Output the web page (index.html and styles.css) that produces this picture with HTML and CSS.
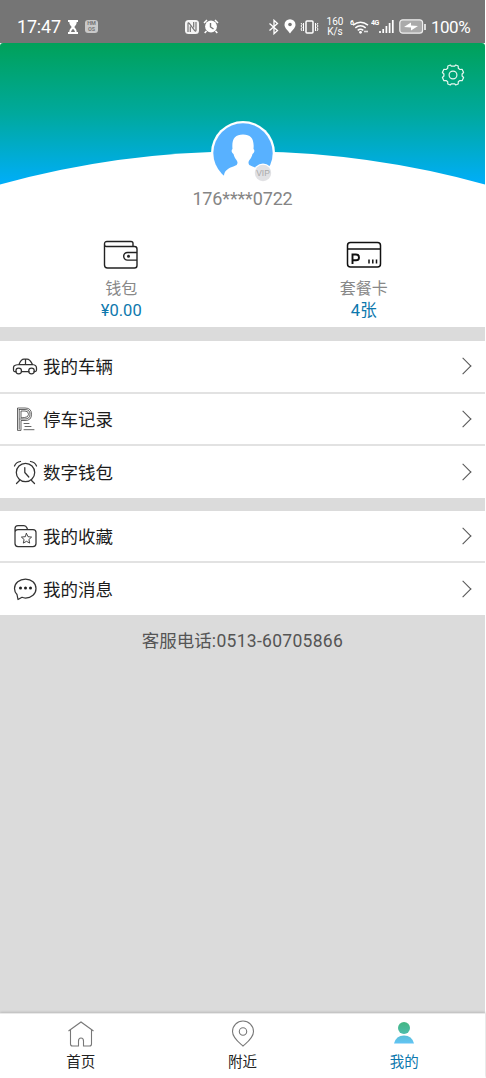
FILE: index.html
```html
<!DOCTYPE html>
<html lang="zh-CN">
<head>
<meta charset="utf-8">
<title>我的</title>
<link rel="stylesheet" href="styles.css">
</head>
<body>
<div class="screen">
  <header class="status">
    <span class="time">17:47</span>
    <svg class="hourglass" width="12" height="14" viewBox="0 0 12 14"><path d="M1 0h10v2H9.700c0 2-1 3.500-2.400 5 1.400 1.500 2.400 3 2.400 5H11v2H1v-2h1.300c0-2 1-3.500 2.400-5C3.300 5.500 2.300 4 2.300 2H1z" fill="#fff"/><path d="M4 12c.3-1.500 1-2.200 2-3 1 .8 1.700 1.500 2 3z" fill="#757575"/></svg>
    <span class="hmos">HM<br>OS</span>
    <svg class="nfc" width="14" height="14" viewBox="0 0 14 14"><rect width="14" height="14" rx="3.500" fill="#f4f4f4"/><path d="M3 12V4q0-2 1.300-.6l5.400 7.200Q11 12 11 10V2M5.300 12V6.500M8.700 2v5.500" fill="none" stroke="#757575" stroke-width="1.200"/></svg>
    <svg class="alarm" width="16" height="15" viewBox="0 0 16 15"><circle cx="8" cy="7.500" r="5.900" fill="#fff"/><path d="M1 4l3-3M12 1l3 3M3.500 12l-1.800 2M12.500 12l1.800 2" stroke="#fff" stroke-width="1.500"/><path d="M7.500 4v4l3 2" fill="none" stroke="#757575" stroke-width="1.400"/></svg>
    <svg class="bluetooth" width="12" height="16" viewBox="0 0 12 16"><path d="M1.500 4.500l8 7L6 14.700V1.300l3.500 3.200-8 7" fill="none" stroke="#fff" stroke-width="1.300"/></svg>
    <svg class="locate" width="12" height="15" viewBox="0 0 12 15"><path d="M6 14.500C4 11.500.5 9 .5 5.700a5.500 5.500 0 0 1 11 0C11.500 9 8 11.500 6 14.500z" fill="#fff"/><circle cx="6" cy="5.500" r="1.800" fill="#757575"/></svg>
    <svg class="vibrate" width="19" height="14" viewBox="0 0 19 14"><rect x="6" y="1" width="7" height="12" rx="1" fill="none" stroke="#fff" stroke-width="1.500"/><path d="M3.500 3v8M1 3l1 1.500L1 6l1 1.500L1 9l1 2M15.500 3v8M18 3l-1 1.500L18 6l-1 1.500L18 9l-1 2" fill="none" stroke="#fff"/></svg>
    <span class="speed">160<br>K/s</span>
    <svg class="wifi" width="20" height="17" viewBox="0 0 20 17"><text x="0" y="7" class="tiny">6</text><path d="M3 7.200q7.500-6 15 0M5.300 9.800q5.200-4 10.400 0M7.700 12.300q2.800-2.200 5.600 0" fill="none" stroke="#fff" stroke-width="1.500"/><circle cx="10.500" cy="14.300" r="1.400" fill="#fff"/><path d="M14 13.500h4" stroke="#ddd" stroke-width="1.600"/></svg>
    <svg class="signal" width="24" height="17" viewBox="0 0 24 17"><text x="0" y="7" class="tiny">4G</text><path d="M9 13v2M12.200 11v4M15.400 8v7M18.600 5v10M21.800 2v13" stroke="#fff" stroke-width="1.700"/></svg>
    <svg class="battery" width="28" height="15" viewBox="0 0 28 15"><rect x=".8" y=".8" width="22.800" height="13.400" rx="3" fill="#aaa" stroke="#eee" stroke-width="1.200"/><path d="M5 8l7-4.500v3l7 .5-7 4.500v-3z" fill="#fff"/><path d="M26 5v6" stroke="#fff" stroke-width="1.500"/></svg>
    <span class="percent">100%</span>
  </header>

  <section class="profile">
    <div class="hero">
      <svg class="curve" width="485" height="35" viewBox="0 0 485 35"><path d="M0 35V33.500A907 907 0 0 1 485 33.500V35z" fill="#fff"/></svg>
      <svg class="gear" width="24" height="24" viewBox="0 0 24 24" fill="none" stroke="#e5f7ef" stroke-width="1.200" stroke-linejoin="round"><path d="M9.300 2l1 1.200h3.400l1-1.200 2.500 1 .1 2.300 1.600 1.200 2.200-.2 1.500 3.200-1.500 1.500v2l1.500 1.500-1.500 3.200-2.200-.2-1.600 1.200-.1 2.300-2.500 1-1-1.200h-3.400l-1 1.200-2.500-1-.1-2.300-1.600-1.200-2.200.2-1.500-3.200 1.500-1.500v-2L1.400 9.500l1.500-3.200 2.200.2 1.600-1.200.1-2.300z"/><circle cx="12" cy="12" r="3.900"/></svg>
      <svg class="avatar" width="66" height="66" viewBox="0 0 66 66"><circle cx="33" cy="33" r="32" fill="#fff"/><circle cx="33" cy="33" r="29.700" fill="#58b1ff"/><path d="M14 56c0-5 4-7.500 8-9 4-1.500 5.500-2 5.500-4.500 0-2-3-4-4-8.500-2-1-2.500-4-1-5C21.500 19 25 14.500 33 14.500S44.500 19 43.500 29c1.500 1 1 4-1 5-1 4.500-4 6.500-4 8.500 0 2.500 1.500 3 5.500 4.500 4 1.500 8 4 8 9v10H14z" fill="#fff"/><circle cx="53" cy="53" r="9.500" fill="#fff"/><circle cx="53" cy="53" r="8.200" fill="#e1e1e4"/><text x="53" y="56" text-anchor="middle" class="vip">VIP</text></svg>
    </div>
    <div class="phone">176****0722</div>
    <div class="assets">
      <div class="asset">
        <svg width="36" height="30" viewBox="0 0 36 30" fill="none" stroke="#222" stroke-width="1.400"><path d="M30 7V3.500Q30 1.500 28 1.500H4Q1.500 1.500 1.500 4v21Q1.500 28 4.500 28h27q2.500 0 2.500-2.500V9q0-2.500-2.500-2.500H3.500Q1.500 6.500 1.500 4M34 12.500H24.500a3.800 3.800 0 0 0 0 7.600H34"/><circle cx="25.500" cy="16.300" r=".8" fill="#222"/></svg>
        <span class="label">钱包</span><span class="value">¥0.00</span>
      </div>
      <div class="asset">
        <svg width="36" height="30" viewBox="0 0 36 30" fill="none" stroke="#111" stroke-width="1.500"><rect x="1.500" y="2.500" width="33" height="24.500" rx="3"/><path d="M1.500 9h33M23 19.500v4M26.800 19.500v4M30.500 19.500v4"/><path d="M6.500 24V14.500h3.500q3 0 3 2.900t-3 2.900H6.500" stroke-width="1.900"/></svg>
        <span class="label">套餐卡</span><span class="value">4张</span>
      </div>
    </div>
  </section>

  <ul class="menu">
    <li class="row"><svg class="icon" width="26" height="26" viewBox="0 0 26 26"><path d="M4 18.500H2.500Q1.500 18.500 1.500 17v-2.500q0-2 2.500-2.500l3-.5q2-5.500 5-5.500h3q3 0 5.500 5.500 4 .5 4 3.500v2q0 1.500-1.500 1.500H22M9.500 18.500h7.500M7 11.500h13.500M13.500 6v5.500"/><circle cx="6.700" cy="18" r="2.800"/><circle cx="19.500" cy="18" r="2.800"/></svg><span>我的车辆</span><i class="arrow"></i></li>
    <li class="row"><svg class="icon park" width="26" height="26" viewBox="0 0 26 26"><path d="M5.500 24V2H13q6.500 0 6.500 6.300T13 14.500H9V24zM9 11.500V5h4q3.500 0 3.500 3.300T13 11.500zM7.200 3.500V23M7.200 3.500H13q5 0 5 4.700T13 13H8M12 17.500h5M13 20.500h6M12 23.700h10"/></svg><span>停车记录</span><i class="arrow"></i></li>
    <li class="row"><svg class="icon" width="26" height="26" viewBox="0 0 26 26"><circle cx="13.500" cy="13.500" r="9.200"/><path d="M12.800 8.500v5l4 4.500M2.500 7Q4 3 8.500 2.500M18.500 2.500Q23 3 24.500 7M7.500 21.500l-3 3M19.500 21.500l3 3"/></svg><span>数字钱包</span><i class="arrow"></i></li>
  </ul>
  <ul class="menu">
    <li class="row"><svg class="icon" width="26" height="26" viewBox="0 0 26 26"><path d="M6 6.500h15q3 0 3 3v11q0 3-3 3H6q-3 0-3-3v-15Q3 2.500 6 2.500h6Q14 2.500 15 5l.5 1.500M3 9q0-2.500 3-2.500"/><path stroke-width=".9" d="M14.500 10.500l1.500 3.200 3.600.4-2.700 2.400.8 3.600-3.200-1.800-3.200 1.800.8-3.600-2.700-2.400 3.600-.4z"/></svg><span>我的收藏</span><i class="arrow"></i></li>
    <li class="row"><svg class="icon" width="26" height="26" viewBox="0 0 26 26"><path d="M5 18.500Q2.500 16 2.500 12.500C2.500 7 7.500 3 13.500 3s10.500 4 10.500 9.500S19.500 22 13.500 22q-2 0-3.500-.7L6 23.500z"/><g fill="#222" stroke="none"><circle cx="8.500" cy="12" r="1.500"/><circle cx="13.500" cy="12" r="1.500"/><circle cx="18.500" cy="12" r="1.500"/></g></svg><span>我的消息</span><i class="arrow"></i></li>
  </ul>
  <p class="service">客服电话<span>:0513-60705866</span></p>

  <nav class="tabs">
    <a class="tab"><svg width="28" height="28" viewBox="0 0 28 28" fill="none" stroke="#777" stroke-width="1.100"><path d="M1.500 11L14 2l12.500 9M3.500 9.500V24q0 2 2 2h6v-5q0-3 2.500-3t2.500 3v5h6q2 0 2-2V9.500"/></svg><span>首页</span></a>
    <a class="tab"><svg width="28" height="28" viewBox="0 0 28 28" fill="none" stroke="#777" stroke-width="1.100"><path d="M14 26C10 22.500 3.500 18 3.500 11.500a10.500 10.500 0 0 1 21 0C24.500 18 18 22.500 14 26z"/><circle cx="14" cy="11.500" r="3.700"/></svg><span>附近</span></a>
    <a class="tab active"><svg width="28" height="28" viewBox="0 0 28 28"><defs><linearGradient id="headFill" x2="0" y2="1"><stop stop-color="#42b682"/><stop offset="1" stop-color="#4dbcab"/></linearGradient><linearGradient id="bodyFill" x2="0" y2="1"><stop stop-color="#5abfd7"/><stop offset="1" stop-color="#62c4f5"/></linearGradient></defs><circle cx="14" cy="8" r="6" fill="url(#headFill)"/><path d="M4 23.500Q6 15.500 14 15.500t10 8z" fill="url(#bodyFill)"/></svg><span>我的</span></a>
  </nav>
</div>
</body>
</html>
```
FILE: styles.css
```css
* { box-sizing: border-box; }
body {
  margin: 0;
  background: #fff;
  font-family: Roboto, "Noto Sans CJK SC", sans-serif;
}
.screen {
  display: flex;
  flex-direction: column;
  width: 485px;
  height: 1078px;
  background: #dbdbdb;
}
svg { display: block; flex: none; }

.status {
  display: flex;
  align-items: center;
  height: 43px;
  padding: 10px 0 0 17px;
  background: #757575;
  color: #fff;
}
.time { width: 44px; font-size: 18px; letter-spacing: -.2px; }
.hourglass { margin-left: 6px; }
.hmos {
  width: 13px;
  height: 13px;
  margin-left: 6px;
  padding-top: 1px;
  border-radius: 3px;
  background: #c9c9c9;
  color: #777;
  font-size: 5.500px;
  font-weight: 700;
  line-height: 5.500px;
  text-align: center;
}
.nfc { margin-left: 87px; }
.alarm { margin-left: 4px; }
.bluetooth { margin-left: 49px; }
.locate { margin-left: 4px; }
.vibrate { margin-left: 4px; }
.speed {
  width: 18px;
  margin-left: 7px;
  font-size: 10px;
  line-height: 10px;
  text-align: center;
}
.wifi { margin-left: 6px; }
.signal { margin-left: 1px; }
.battery { margin-left: 4px; }
.percent { margin-left: 4px; font-size: 17px; letter-spacing: -.5px; }
.tiny { fill: #fff; font-size: 7px; font-weight: 700; letter-spacing: -.5px; }

.profile { height: 284px; background: #fff; }
.hero {
  position: relative;
  height: 142px;
  border-radius: 3px 3px 0 0;
  background: linear-gradient(#00a159, #00a99d 50%, #00aefa);
}
.curve { position: absolute; left: 0; bottom: -1px; }
.gear { position: absolute; top: 20px; left: 441px; }
.avatar { position: absolute; top: 77px; left: 210px; }
.vip { fill: #aaa; font: 8.500px "Liberation Sans", sans-serif; }
.phone {
  height: 52px;
  padding-top: 3px;
  color: #858585;
  font-size: 18px;
  line-height: 22px;
  letter-spacing: -.15px;
  text-align: center;
}
.assets { display: flex; }
.asset {
  display: flex;
  flex: 1;
  flex-direction: column;
  align-items: center;
  padding-top: 3px;
}
.label { margin-top: 8px; color: #888; font-size: 16px; line-height: 22px; }
.value { color: #0d78ad; font-size: 16.500px; line-height: 21px; }

.menu {
  margin: 14px 0 0;
  padding: 0;
  background: #fff;
  list-style: none;
}
.menu + .menu { margin-top: 13px; }
.row {
  display: flex;
  align-items: center;
  height: 52.500px;
  padding: 0 16px 0 12px;
  border-bottom: 2px solid #e2e2e2;
  color: #1c1c1c;
  font-size: 17.500px;
}
.row span { margin-top: -1px; }
.row:last-child { height: 51.500px; border-bottom: 0; }
.icon {
  margin-right: 5px;
  fill: none;
  stroke: #333;
  stroke-width: 1.250;
  stroke-linecap: round;
  stroke-linejoin: round;
}
.park { stroke-width: .75; }
.arrow {
  width: 12px;
  height: 12px;
  margin: 0 0 0 auto;
  border-top: 1.300px solid #555;
  border-right: 1.300px solid #555;
  transform: rotate(45deg);
}
.service {
  margin: 14px 0 0;
  color: #555;
  font-size: 17.500px;
  line-height: 24px;
  text-align: center;
}
.service span { letter-spacing: .3px; }

.tabs {
  display: flex;
  height: 65px;
  margin-top: auto;
  padding-top: 7px;
  border-top: 1px solid #e9e9e9;
  background: #fff;
  box-shadow: 0 -1px 2px #bbb;
}
.tab {
  display: flex;
  flex: 1;
  flex-direction: column;
  align-items: center;
  color: #222;
  font-size: 14.500px;
  line-height: 20px;
}
.tab svg { margin-top: -1px; }
.tab span { margin-top: 5px; }
.active { color: #0d78ad; }
```
